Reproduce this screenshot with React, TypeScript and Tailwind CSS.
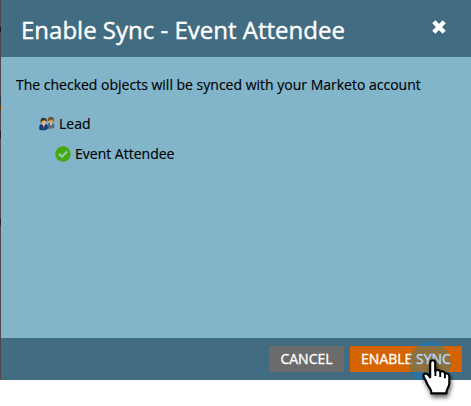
function PeopleIcon() {
  return (
    <svg className="block h-4 w-4 shrink-0" viewBox="0 0 16 16">
      <path d="M8.2 13V9.3q0-1.8 2-2.2h3.3q2 .5 2 2.4v2.1q-1.5 1-3.4 1z" fill="#566b7b" />
      <path d="M11 7.2 12 10l1.4-2.8z" fill="#eef3f4" />
      <ellipse cx="12" cy="4.4" rx="2.4" ry="2.8" fill="#dba45c" />
      <path d="M8.9 5.4Q8.4.8 12 .8q3.5 0 3 5l-.8-.3q-.2-1.4-1-2-1.6 1-3.3 1.1z" fill="#6f5626" />
      <path d="M.3 14v-3.8Q.5 8.3 2.6 8h3.8q2.3.5 2.3 2.5V13q-1.7 1.3-4.4 1.3Q2 14.3.3 14z" fill="#163a70" />
      <path d="m3.3 8 1.3 4.1L6.1 8z" fill="#f5f7fc" />
      <path d="m4.4 9-.3 3 .6.8.7-.8-.3-3z" fill="#b94642" />
      <ellipse cx="4.8" cy="5.6" rx="2.4" ry="2.8" fill="#e6b173" />
      <path d="M1.6 6.6Q1 1.7 4.6 1.7q3.7 0 3.2 4Q6.4 5 5.4 4 4.2 5 2.9 5l-.5 1.8z" fill="#3e3627" />
    </svg>
  );
}

function CheckIcon() {
  return (
    <svg className="block h-4 w-4 shrink-0" viewBox="0 0 16 16">
      <circle cx="8" cy="8" r="7.7" fill="#43aa0b" />
      <path d="m4 7.9 2.9 2.8 5.2-5.2" fill="none" stroke="#91c5b5" strokeWidth="2.3" />
    </svg>
  );
}

function Pointer() {
  return (
    <svg className="pointer-events-none absolute top-[339px] left-[402px] z-20 h-[67px] w-[69px]" viewBox="0 0 69 67">
      <defs>
        <filter id="shade" x="-30%" y="-30%" width="160%" height="170%">
          <feDropShadow dx="1" dy="3" stdDeviation="2" floodColor="#000" floodOpacity=".6" />
        </filter>
      </defs>
      <path
        d="M28.2 24.2c0-4 5-4 5 0v8c1-2 4.5-1.8 5 .6 1.8-1.3 4.5-.3 4.7 1.8 2.2-.8 4.4.6 4.4 3v6.8c0 3-2.8 6-2.8 8.2v1.8H29.2v-2.2c0-2.2-3.7-5.3-4.8-9.2-.7-2.6-3.2-4.5-3-6.5.3-2.5 3.3-2.4 5-.4l1.8 2.2z"
        fill="#fff"
        stroke="#000"
        strokeWidth="2.1"
        strokeLinejoin="round"
        filter="url(#shade)"
      />
      <path d="M33.4 31v6M38.2 33v5M42.9 35v4.2" stroke="#000" strokeWidth="1.9" fill="none" />
    </svg>
  );
}

export default function App() {
  return (
    <div className="relative h-[406px] w-[471px] overflow-hidden bg-white font-['Open_Sans','Noto_Sans',sans-serif]">
      <div className="flex h-[380px]">
        <div className="flex w-px shrink-0 flex-col bg-[#51494a]">
          <i className="mt-[27px] h-[5px] bg-[#101820]" />
          <i className="mt-[64px] h-[10px] bg-[#303b46]" />
          <i className="h-[5px] bg-[#703711]" />
          <i className="mt-[20px] h-[8px] bg-[#242225]" />
          <i className="mt-[80px] h-[6px] bg-[#242225]" />
        </div>
        <section className="flex min-w-0 flex-1 flex-col bg-[#82b4ca]">
          <header className="flex h-[57px] shrink-0 justify-between bg-[#416c81] pl-5 text-white">
            <h1 className="pt-[13px] text-[24px] leading-[34px] whitespace-nowrap [-webkit-text-stroke:0.4px_white]">Enable Sync - Event Attendee</h1>
            <button aria-label="Close" className="mt-[20px] mr-[25px] h-[14px] w-[14px]">
              <svg className="block h-[14px] w-[14px] overflow-visible" viewBox="0 0 14 14">
                <path d="m1.8 1.8 10.4 10.4M12.2 1.8 1.8 12.2" stroke="#fff" strokeWidth="4.4" />
              </svg>
            </button>
          </header>
          <main className="flex-1 text-[14px] leading-5 text-black [-webkit-text-stroke:0.15px_black]">
            <p className="pt-[18px] pl-[15px] whitespace-nowrap">The checked objects will be synced with your Marketo account</p>
            <div className="mt-[19px] flex items-center gap-1 pl-[38px]"><PeopleIcon /><span>Lead</span></div>
            <div className="mt-[10px] flex items-center gap-1 pl-[54px]"><CheckIcon /><span>Event Attendee</span></div>
          </main>
          <footer className="flex h-[42px] shrink-0 justify-end gap-[6px] bg-[#416c81] pt-2 pr-[9px] text-[14px] leading-[26px] text-white [-webkit-text-stroke:0.35px_currentColor]">
            <button className="h-[26px] w-[75px] bg-[#6b6b6b]">CANCEL</button>
            <button className="h-[26px] w-[112px] bg-[#d56400] whitespace-nowrap">ENABLE <span className="relative z-10 text-[#b5dcfb] [-webkit-text-stroke:0.35px_#b5dcfb]">SYNC</span></button>
          </footer>
        </section>
      </div>
      <div className="pointer-events-none absolute top-[342px] left-[409px] h-[42px] w-[42px] rounded-full bg-[linear-gradient(rgba(20,120,200,0.55)_4px,rgba(70,125,130,0.5)_4px,rgba(70,125,130,0.5)_30px,rgba(20,120,200,0.55)_30px)] [clip-path:inset(0_0_4px_0)]" />
      <Pointer />
    </div>
  );
}
